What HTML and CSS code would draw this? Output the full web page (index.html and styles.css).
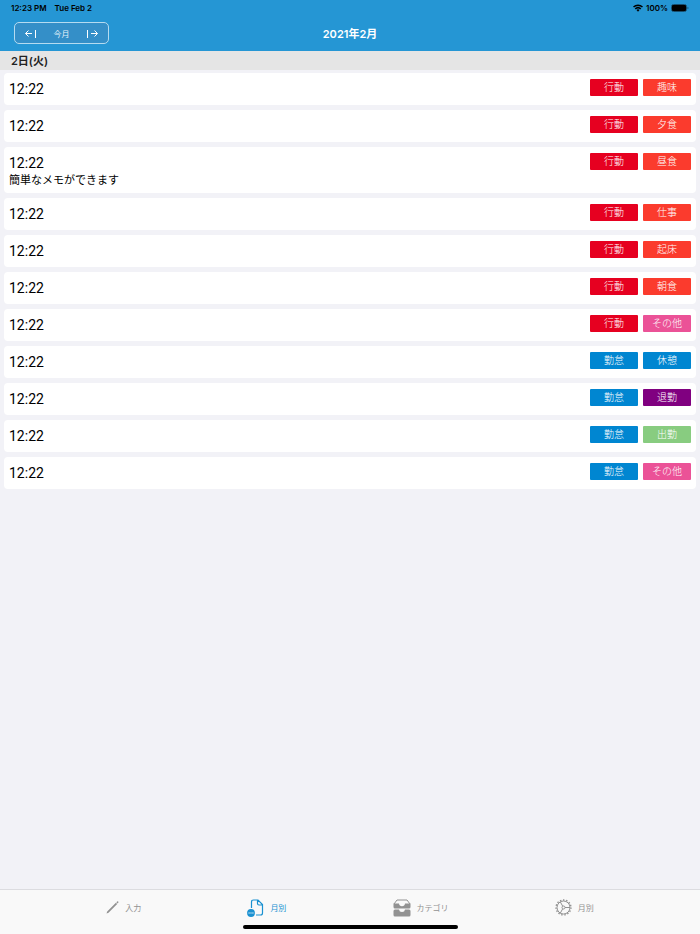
FILE: index.html
```html
<!DOCTYPE html>
<html lang="ja">
<head>
  <title>2021年2月</title>
  <meta charset="UTF-8">
  <meta name="viewport" content="width=device-width, initial-scale=1">
  <link rel="stylesheet" href="styles.css">
</head>
<body>
  <header class="header">
    <div class="status-bar">
      <div class="status-left">
        <span>12:23 PM</span>
        <span>Tue Feb 2</span>
      </div>
      <div class="status-right">
        <svg width="10" height="8" viewBox="0 0 20 15" fill="none" stroke="#000" stroke-width="3">
          <path d="M1 5.5a13 13 0 0 1 18 0M4.5 9.3a8 8 0 0 1 11 0"/>
          <path d="M7 11.5a4.500 4.500 0 0 1 6 0L10 15z" fill="#000" stroke="none"/>
        </svg>
        <span>100%</span>
        <svg width="18" height="8" viewBox="0 0 18 8">
          <rect x="0.500" y="0.500" width="15" height="7" rx="2" fill="none" stroke="#174f70"/>
          <rect x="1" y="1" width="14" height="6" rx="1"/>
          <path d="M16.500 2.700v2.600q1-.3 1-1.300t-1-1.300z" fill="#174f70"/>
        </svg>
      </div>
    </div>
    <div class="nav-bar">
      <div class="month-switch">
        <button type="button" aria-label="前月">
          <svg width="13" height="9" viewBox="0 0 13 9"><path d="M8 4.500H1.500M4.500 1.500l-3 3 3 3M11.500 1v8"/></svg>
        </button>
        <button type="button">今月</button>
        <button type="button" aria-label="翌月">
          <svg width="13" height="9" viewBox="0 0 13 9"><path d="M5 4.500h6.500M8.500 1.500l3 3-3 3M1.500 1v8"/></svg>
        </button>
      </div>
      <h1>2021年2月</h1>
    </div>
  </header>

  <main class="content">
    <h2 class="day-header">2日(火)</h2>
    <ul class="entry-list">
      <li class="entry">
        <div class="entry-text"><time>12:22</time></div>
        <span class="badge action">行動</span><span class="badge daily">趣味</span>
      </li>
      <li class="entry">
        <div class="entry-text"><time>12:22</time></div>
        <span class="badge action">行動</span><span class="badge daily">夕食</span>
      </li>
      <li class="entry">
        <div class="entry-text"><time>12:22</time><p>簡単なメモができます</p></div>
        <span class="badge action">行動</span><span class="badge daily">昼食</span>
      </li>
      <li class="entry">
        <div class="entry-text"><time>12:22</time></div>
        <span class="badge action">行動</span><span class="badge daily">仕事</span>
      </li>
      <li class="entry">
        <div class="entry-text"><time>12:22</time></div>
        <span class="badge action">行動</span><span class="badge daily">起床</span>
      </li>
      <li class="entry">
        <div class="entry-text"><time>12:22</time></div>
        <span class="badge action">行動</span><span class="badge daily">朝食</span>
      </li>
      <li class="entry">
        <div class="entry-text"><time>12:22</time></div>
        <span class="badge action">行動</span><span class="badge other">その他</span>
      </li>
      <li class="entry">
        <div class="entry-text"><time>12:22</time></div>
        <span class="badge work">勤怠</span><span class="badge work">休憩</span>
      </li>
      <li class="entry">
        <div class="entry-text"><time>12:22</time></div>
        <span class="badge work">勤怠</span><span class="badge leave">退勤</span>
      </li>
      <li class="entry">
        <div class="entry-text"><time>12:22</time></div>
        <span class="badge work">勤怠</span><span class="badge arrive">出勤</span>
      </li>
      <li class="entry">
        <div class="entry-text"><time>12:22</time></div>
        <span class="badge work">勤怠</span><span class="badge other">その他</span>
      </li>
    </ul>
  </main>

  <footer class="footer">
    <nav class="tab-bar">
      <a href="#input" class="tab">
        <svg width="13" height="13" viewBox="0 0 13 13">
          <path d="M.5 12.500l.7-2 8.700-8.700 1.300 1.300-8.700 8.700zM10.300 1.300l.9-.9q.5-.3 1 .2t.2 1l-.8.9z" fill="currentColor"/>
        </svg>
        <span>入力</span>
      </a>
      <a href="#monthly" class="tab active">
        <svg width="17" height="18" viewBox="0 0 17 18">
          <path d="M4.500 9V3q0-2 2-2H11l4.500 4.500V14q0 2-2 2H9M10.500 1v3.500q0 1.500 1.500 1.500h3.500" fill="none" stroke="currentColor" stroke-width="1.200"/>
          <circle cx="4" cy="14" r="3.900" fill="currentColor"/>
          <path d="M1.500 14h1.200M3.400 14h1.200M5.300 14h1.200" stroke="#fff" stroke-width="1.200"/>
        </svg>
        <span>月別</span>
      </a>
      <a href="#category" class="tab">
        <svg width="18" height="18" viewBox="0 0 18 18" fill="currentColor">
          <path d="M1 5L4 1h10l3 4" fill="none" stroke="currentColor" stroke-width="1"/>
          <path d="M.5 4.500H6q.3 2.800 3 2.800t3-2.800h5.500V8q0 1.500-1.500 1.500H2Q.5 9.500.5 8z"/>
          <path d="M2 10.500h4q.3 2.500 3 2.500t3-2.500h4q1.500 0 1.500 1.500v4q0 1.500-1.500 1.500H2Q.5 17.500.5 16v-4q0-1.500 1.500-1.500z"/>
        </svg>
        <span>カテゴリ</span>
      </a>
      <a href="#settings" class="tab">
        <svg width="17" height="17" viewBox="0 0 17 17" fill="none" stroke="currentColor">
          <circle cx="8.500" cy="8.500" r="7.500" stroke-width="1.300" stroke-dasharray="1.500 1.645"/>
          <circle cx="8.500" cy="8.500" r="6.500"/>
          <circle cx="8.500" cy="8.500" r="1.500"/>
          <path d="M10 8.500h5M7.700 7.200L5.300 2.900M7.700 9.800l-2.400 4.300"/>
        </svg>
        <span>月別</span>
      </a>
    </nav>
    <div class="home-indicator"></div>
  </footer>
</body>
</html>
```

FILE: styles.css
```css
* {
  box-sizing: border-box;
}
body {
  margin: 0;
  min-height: 100vh;
  display: flex;
  flex-direction: column;
  font-family: Inter, "Noto Sans CJK JP", sans-serif;
  background-color: #f2f2f7;
  color: #000;
}
h1, h2, p, ul {
  margin: 0;
  padding: 0;
}
.header {
  padding-bottom: 1px;
  background-color: #2596d4;
}
.status-bar {
  display: flex;
  justify-content: space-between;
  align-items: center;
  height: 16px;
  padding: 0 11px;
  font-size: 8px;
  font-weight: 600;
}
.status-left {
  display: flex;
  gap: 8px;
}
.status-right {
  display: flex;
  align-items: center;
  gap: 3px;
}
.nav-bar {
  display: grid;
  grid-template-columns: 1fr auto 1fr;
  align-items: center;
  height: 34px;
  padding: 0 14px;
}
.nav-bar h1 {
  color: #fff;
  font-size: 11px;
  font-weight: 600;
}
.month-switch {
  display: flex;
  justify-self: start;
  height: 22px;
  border: 1px solid #b5dbf0;
  border-radius: 5px;
  background-color: #348fc8;
}
.month-switch button {
  display: flex;
  align-items: center;
  justify-content: center;
  width: 31px;
  padding: 0;
  border: none;
  background: none;
  color: #e6f3fa;
  font-family: inherit;
  font-size: 8px;
  cursor: pointer;
}
.month-switch svg {
  fill: none;
  stroke: #fff;
}
.day-header {
  height: 19px;
  padding: 0 11px;
  background-color: #e5e5e5;
  color: #222;
  font-size: 11px;
  font-weight: 600;
  line-height: 20px;
}
.content {
  flex: 1;
}
.entry-list {
  display: flex;
  flex-direction: column;
  gap: 5px;
  padding: 3px 4px;
  list-style: none;
}
.entry {
  display: flex;
  align-items: flex-start;
  gap: 5px;
  min-height: 32px;
  padding: 6px 5px;
  border-radius: 4px;
  background-color: #fff;
}
.entry-text {
  flex: 1;
}
.entry-text time {
  display: block;
  font-family: Roboto, sans-serif;
  font-size: 14px;
  line-height: 20px;
}
.entry-text p {
  font-size: 11px;
  line-height: 14px;
}
.badge {
  width: 48px;
  border-radius: 1px;
  color: #fff;
  font-size: 10px;
  font-weight: 300;
  line-height: 17px;
  text-align: center;
}
.action {
  background-color: #e60020;
}
.daily {
  background-color: #fb3b2d;
}
.other {
  background-color: #eb5297;
}
.work {
  background-color: #0086d1;
}
.leave {
  background-color: #800080;
}
.arrive {
  background-color: #88cc80;
}
.footer {
  position: sticky;
  bottom: 0;
  border-top: 1px solid #dcdce0;
  background-color: #f9f9f9;
}
.tab-bar {
  display: flex;
  justify-content: space-evenly;
  height: 35px;
}
.tab {
  display: flex;
  align-items: center;
  gap: 6px;
  color: #929292;
  font-size: 8px;
  text-decoration: none;
}
.tab.active {
  color: #1a91d1;
}
.home-indicator {
  width: 215px;
  height: 4px;
  margin: 0 auto 5px;
  border-radius: 2px;
  background-color: #000;
}
```
